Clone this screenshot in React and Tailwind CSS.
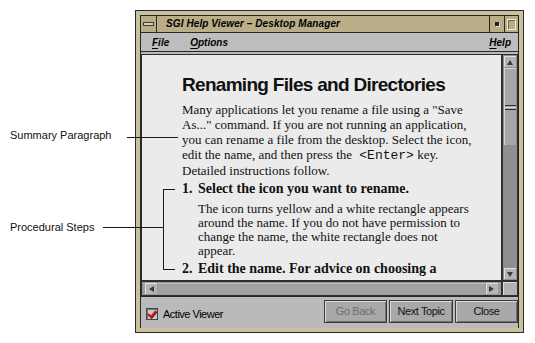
function Arrow({ dir }) {
  const paths = {
    up: 'M3 1 L6 6 L0 6 Z',
    down: 'M0 1 L6 1 L3 6 Z',
    left: 'M1 3 L6 0 L6 6 Z',
    right: 'M0 0 L5 3 L0 6 Z',
  };
  return (
    <div className="w-[12px] h-[11px] shrink-0 bg-[#b4b4b4] border-t border-l border-[#e2e2e2] border-r-[#555] border-b-[#555] flex items-center justify-center">
      <svg width="7" height="7" viewBox="0 0 7 7">
        <path d={paths[dir]} fill="#3a3a3a" />
      </svg>
    </div>
  );
}

function TitleBar() {
  return (
    <div className="h-[17px] shrink-0 flex bg-[#b9ae88] border-b border-[#2a2a2a]">
      <div className="w-[16px] border-r border-[#2a2a2a] flex items-center justify-center">
        <div className="w-[11px] h-[4px] bg-[#d6cfb0] border border-[#3a3a3a]" />
      </div>
      <div className="flex-1 pl-[9px] flex items-center text-[10px] font-bold italic tracking-[0.1px] leading-none text-black">
        SGI Help Viewer – Desktop Manager
      </div>
      <div className="w-[15px] border-l border-[#2a2a2a] flex items-center justify-center">
        <div className="w-[4px] h-[4px] bg-[#222] shadow-[1px_1px_0_#e8e2c8]" />
      </div>
      <div className="w-[14px] border-l border-[#2a2a2a] flex items-center justify-center">
        <div className="w-[9px] h-[11px] border border-[#f1ecd6] shadow-[inset_1px_1px_0_#6b6448]" />
      </div>
    </div>
  );
}

function MenuItem({ first, rest, className = '' }) {
  return (
    <span className={`text-[10px] font-bold italic leading-none ${className}`}>
      <span className="underline underline-offset-2">{first}</span>
      {rest}
    </span>
  );
}

function MenuBar() {
  return (
    <div className="h-[19px] shrink-0 flex items-center pt-[2px] pl-[11px] pr-[7px] gap-[21px] bg-[#bdbdbd] border-b border-[#2a2a2a]">
      <MenuItem first="F" rest="ile" />
      <MenuItem first="O" rest="ptions" />
      <MenuItem first="H" rest="elp" className="ml-auto" />
    </div>
  );
}

function Content() {
  const serif = "font-['Liberation_Serif','Times_New_Roman',serif]";
  return (
    <div className="flex-1 min-w-0 overflow-hidden border border-[#2e2e2e] bg-[#ebebeb] pl-[40px] pt-[19px] whitespace-nowrap">
      <div className="text-[19px] leading-[22px] font-bold tracking-[-0.7px] text-[#111]">
        Renaming Files and Directories
      </div>
      <div className={`${serif} mt-[6px] text-[13px] leading-[15px] text-[#111]`}>
        <div>Many applications let you rename a file using a "Save</div>
        <div>As..." command. If you are not running an application,</div>
        <div>you can rename a file from the desktop. Select the icon,</div>
        <div>
          edit the name, and then press the{' '}
          <span className="font-['Liberation_Mono','Courier_New',monospace] ml-[4px]">&lt;Enter&gt;</span> key.
        </div>
        <div>Detailed instructions follow.</div>
      </div>
      <div className={`${serif} mt-[3px] flex text-[14px] leading-[16px] font-bold text-[#111]`}>
        <span className="w-[16px]">1.</span>
        <span>Select the icon you want to rename.</span>
      </div>
      <div className={`${serif} mt-[5px] pl-[16px] text-[13px] leading-[14px] text-[#111]`}>
        <div>The icon turns yellow and a white rectangle appears</div>
        <div>around the name. If you do not have permission to</div>
        <div>change the name, the white rectangle does not</div>
        <div>appear.</div>
      </div>
      <div className={`${serif} mt-[3px] flex text-[14px] leading-[16px] font-bold text-[#111]`}>
        <span className="w-[16px]">2.</span>
        <span>Edit the name. For advice on choosing a</span>
      </div>
    </div>
  );
}

function VScroll() {
  return (
    <div className="w-[16px] shrink-0 border border-[#2e2e2e] bg-[#8f8f8f] flex flex-col items-center p-px gap-px">
      <Arrow dir="up" />
      <div className="w-[12px] h-[77px] bg-[#a6a6a6] border-t border-l border-[#d4d4d4] border-r-[#5a5a5a] border-b-[#5a5a5a] flex flex-col items-center justify-center gap-[1px]">
        <div className="w-full h-px bg-[#2e2e2e]" />
        <div className="w-full h-px bg-[#e0e0e0]" />
        <div className="w-full h-px bg-[#2e2e2e]" />
      </div>
      <div className="flex-1" />
      <Arrow dir="down" />
    </div>
  );
}

function HScroll() {
  return (
    <div className="h-[15px] shrink-0 flex">
      <div className="flex-1 flex items-center gap-px px-[3px] border border-[#2e2e2e] bg-[#9b9b9b]">
        <Arrow dir="left" />
        <div className="flex-1 h-[11px] bg-[#a2a2a2] border-t border-[#bcbcbc]" />
        <Arrow dir="right" />
      </div>
      <div className="w-[16px] border border-[#2e2e2e] bg-[#b2b2b2] shadow-[inset_1px_1px_0_#dcdcdc]" />
    </div>
  );
}

function Button({ children, disabled }) {
  return (
    <div
      className={`h-[23px] flex items-center justify-center bg-[#a9a9a9] border border-[#3a3a3a] shadow-[inset_1px_1px_0_#dadada,inset_-1px_-1px_0_#707070] text-[11px] tracking-[-0.4px] ${
        disabled ? 'text-[#6e6e6e]' : 'text-[#111]'
      }`}
    >
      {children}
    </div>
  );
}

function BottomPanel() {
  return (
    <div className="h-[32px] shrink-0 flex border-t border-[#2a2a2a] bg-[#bababa] pt-[3px]">
      <div className="flex items-center self-start mt-[8px] pl-[5px] gap-[5px]">
        <div className="w-[12px] h-[12px] bg-[#c8c8c8] border border-[#444] shadow-[inset_1px_1px_0_#777] flex items-center justify-center">
          <svg width="10" height="10" viewBox="0 0 10 10">
            <path d="M1 5 L4 8 L9 2" stroke="#222" strokeWidth="2" fill="none" transform="translate(0.6 0.6)" />
            <path d="M1 5 L4 8 L9 2" stroke="#d4161b" strokeWidth="2" fill="none" />
          </svg>
        </div>
        <span className="text-[11px] tracking-[-0.5px] leading-none">Active Viewer</span>
      </div>
      <div className="ml-auto flex gap-[2px]">
        <div className="w-[63px]">
          <Button disabled>Go Back</Button>
        </div>
        <div className="w-[64px]">
          <Button>Next Topic</Button>
        </div>
        <div className="w-[63px]">
          <Button>Close</Button>
        </div>
      </div>
    </div>
  );
}

function Window() {
  return (
    <div className="mt-[10px] w-[389px] h-[323px] shrink-0 border border-[#2a2a2a] bg-[#c9c09c] p-[4px] flex">
      <div className="flex-1 flex flex-col border border-[#262626] bg-[#b9b9b9] min-w-0">
        <TitleBar />
        <MenuBar />
        <div className="h-[244px] shrink-0 flex flex-col pt-[2px]">
          <div className="h-[227px] shrink-0 flex">
            <Content />
            <VScroll />
          </div>
          <HScroll />
        </div>
        <BottomPanel />
      </div>
    </div>
  );
}

export default function App() {
  return (
    <div className="relative w-[535px] h-[343px] bg-white overflow-hidden flex font-['Liberation_Sans',Arial,sans-serif] text-black">
      <div className="w-[135px] shrink-0 flex flex-col pl-[10px] text-[11px] leading-[13px] text-[#111]">
        <div className="mt-[129px]">Summary Paragraph</div>
        <div className="mt-[79px]">Procedural Steps</div>
      </div>
      <Window />

      {/* callout lines */}
      <div className="absolute left-[127px] top-[137px] w-[51px] h-px bg-[#1a1a1a]" />
      <div className="absolute left-[103px] top-[227px] w-[60px] h-px bg-[#1a1a1a]" />
      <div className="absolute left-[163px] top-[189px] w-px h-[81px] bg-[#1a1a1a]" />
      <div className="absolute left-[163px] top-[189px] w-[12px] h-px bg-[#1a1a1a]" />
      <div className="absolute left-[163px] top-[269px] w-[12px] h-px bg-[#1a1a1a]" />
    </div>
  );
}
